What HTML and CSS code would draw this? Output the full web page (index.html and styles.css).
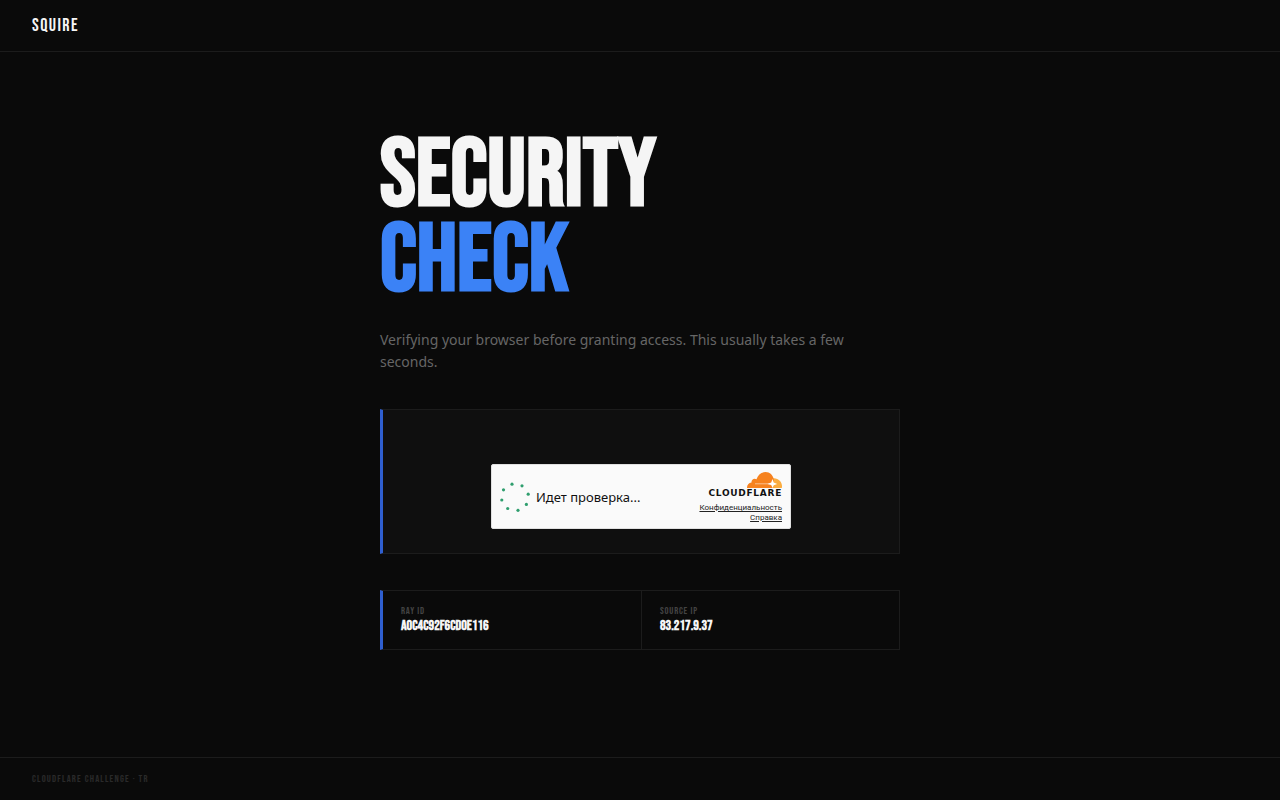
FILE: index.html
```html
<!DOCTYPE html>
<html lang="en">
<head>
    <meta charset="UTF-8">
    <meta name="viewport" content="width=device-width, initial-scale=1.0">
    <title>Security Check</title>
    <link rel="stylesheet" href="styles.css">
</head>
<body>

<header class="topbar">
    <span class="brand">SQUIRE</span>
</header>

<main class="content">
    <h1 class="title">SECURITY<br><span class="accent">CHECK</span></h1>
    <p class="lead">Verifying your browser before granting access. This usually takes a few seconds.</p>

    <section class="challenge">
        <div class="widget" lang="ru">
            <svg class="spinner" viewBox="0 0 30 30" aria-hidden="true">
                <g fill="#2f9e6e">
                    <circle cx="12" cy="2.2" r="1.6"/>
                    <circle cx="22" cy="3.8" r="1.6"/>
                    <circle cx="28.2" cy="12.2" r="1.6"/>
                    <circle cx="26.4" cy="22.4" r="1.6"/>
                    <circle cx="18" cy="28.3" r="1.6"/>
                    <circle cx="7.7" cy="26.5" r="1.6"/>
                    <circle cx="1.8" cy="18" r="1.6"/>
                    <circle cx="3.5" cy="7.8" r="1.6"/>
                </g>
            </svg>
            <span class="status">Идет проверка...</span>
            <div class="vendor">
                <svg class="cloud" viewBox="0 0 36 16" aria-hidden="true">
                    <path fill="#fbad41" d="M27 6.200c5-.6 9 3.300 9 8 0 .8-.1 1.300-.2 1.800H22z"/>
                    <path fill="#f6821f" d="M1 16c-.1-3 1.600-5.300 4.500-5.600C5.300 7.500 8.100 5.700 10.500 7.200 11.800 2.900 15.300 0 19.500 0c4.400 0 7.500 3.200 8.300 7.300L26.500 16z"/>
                    <path fill="#fff" fill-opacity=".5" d="M9 11.300h16v1H9z"/>
                    <path fill="#fff" d="M26.500 7l1.200 3.600 3.500 1.400-3.500 1.200-1.200 2.800-1.300-2.900-3.700-1.200 3.700-1.300z"/>
                </svg>
                <span class="wordmark">CLOUDFLARE</span>
                <a href="#privacy">Конфиденциальность</a>
                <a href="#help">Справка</a>
            </div>
        </div>
    </section>

    <dl class="details">
        <div class="detail">
            <dt>RAY ID</dt>
            <dd>A0C4C92F6CD0E116</dd>
        </div>
        <div class="detail">
            <dt>SOURCE IP</dt>
            <dd>83.217.9.37</dd>
        </div>
    </dl>
</main>

<footer class="bottombar">CLOUDFLARE CHALLENGE · TR</footer>

</body>
</html>
```
FILE: styles.css
```css
* {
    box-sizing: border-box;
}

body {
    margin: 0;
    min-height: 100vh;
    display: flex;
    flex-direction: column;
    background-color: #0a0a0a;
    color: #f5f5f5;
    font-family: "Noto Sans", "Open Sans", sans-serif;
}

.brand,
.title,
.details,
.bottombar {
    font-family: "Bebas Neue", "Liberation Sans Narrow", sans-serif;
}

.topbar {
    padding: 15px 32px 14px;
    border-bottom: 1px solid #1c1c1c;
}

.brand {
    display: block;
    font-size: 18px;
    line-height: 22px;
    letter-spacing: 0.08em;
}

.content {
    flex: 1;
    width: 100%;
    max-width: 520px;
    margin: 0 auto;
    padding: 82px 0 32px;
}

.title {
    margin: 0 0 25px;
    font-size: 96px;
    line-height: 85px;
    font-weight: 700;
}

.accent {
    color: #3b82f6;
}

.lead {
    max-width: 480px;
    margin: 0 0 36px;
    font-size: 14px;
    line-height: 22px;
    color: #666;
}

.challenge {
    display: flex;
    justify-content: center;
    margin-bottom: 36px;
    padding: 54px 24px 24px;
    background-color: #0f0f0f;
    border: 1px solid #1c1c1c;
    border-left: 3px solid #2f5fd0;
}

.widget {
    display: flex;
    align-items: center;
    width: 300px;
    height: 65px;
    padding: 0 8px;
    background-color: #fafafa;
    border: 1px solid #e0e0e0;
    border-radius: 2px;
    color: #232323;
}

.spinner {
    width: 30px;
    height: 30px;
}

.status {
    margin-left: 6px;
    font-size: 13px;
    line-height: 18px;
    color: #111;
}

.vendor {
    display: flex;
    flex-direction: column;
    align-items: flex-end;
    margin-left: auto;
    padding-top: 2px;
}

.cloud {
    width: 36px;
    height: 16px;
}

.wordmark {
    margin-bottom: 4px;
    font-family: "DejaVu Sans", sans-serif;
    font-size: 9px;
    line-height: 11px;
    font-weight: 700;
    letter-spacing: 0.08em;
    color: #111;
}

.vendor a {
    font-family: Roboto, sans-serif;
    font-size: 8px;
    line-height: 10px;
    color: #232323;
}

.details {
    display: grid;
    grid-template-columns: 1fr 1fr;
    margin: 0;
    border: 1px solid #1c1c1c;
    border-left: 3px solid #2f5fd0;
}

.detail {
    padding: 14px 18px 15px;
}

.detail + .detail {
    border-left: 1px solid #1c1c1c;
}

.detail dt {
    margin-bottom: 1px;
    font-size: 10px;
    line-height: 12px;
    letter-spacing: 0.08em;
    color: #444;
}

.detail dd {
    margin: 0;
    font-size: 14px;
    line-height: 16px;
    font-weight: 700;
}

.bottombar {
    padding: 15px 32px;
    border-top: 1px solid #1c1c1c;
    font-size: 10px;
    line-height: 12px;
    letter-spacing: 0.12em;
    color: #2a2a2a;
}
```
